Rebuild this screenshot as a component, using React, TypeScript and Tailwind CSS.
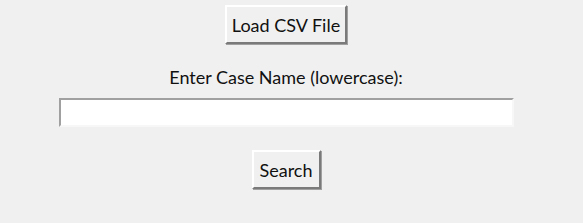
import React from "react";

const font = { fontFamily: '"Lato", "Liberation Sans", sans-serif' };

export default function App() {
  return (
    <div
      className="w-[583px] h-[223px] bg-[#f0f0f0] flex flex-col items-center pr-[11px] text-[#111] text-[18px]"
      style={font}
    >
      <button className="mt-[5px] h-[39px] w-[122px] bg-[#f0f0f0] border-2 border-t-white border-l-white border-r-[#7a7a7a] border-b-[#7a7a7a] shadow-[1px_1px_0_#a0a0a0] leading-none">
        Load CSV File
      </button>
      <div className="mt-[20px] h-[26px] leading-[26px]">Enter Case Name (lowercase):</div>
      <input
        className="mt-[8px] w-[455px] h-[29px] bg-white border-2 border-t-[#a0a0a0] border-l-[#a0a0a0] border-r-[#f7f7f7] border-b-[#f7f7f7] outline-none px-1"
        style={font}
      />
      <button className="mt-[23px] h-[39px] w-[69px] bg-[#f0f0f0] border-2 border-t-white border-l-white border-r-[#7a7a7a] border-b-[#7a7a7a] shadow-[1px_1px_0_#a0a0a0] leading-none">
        Search
      </button>
    </div>
  );
}
